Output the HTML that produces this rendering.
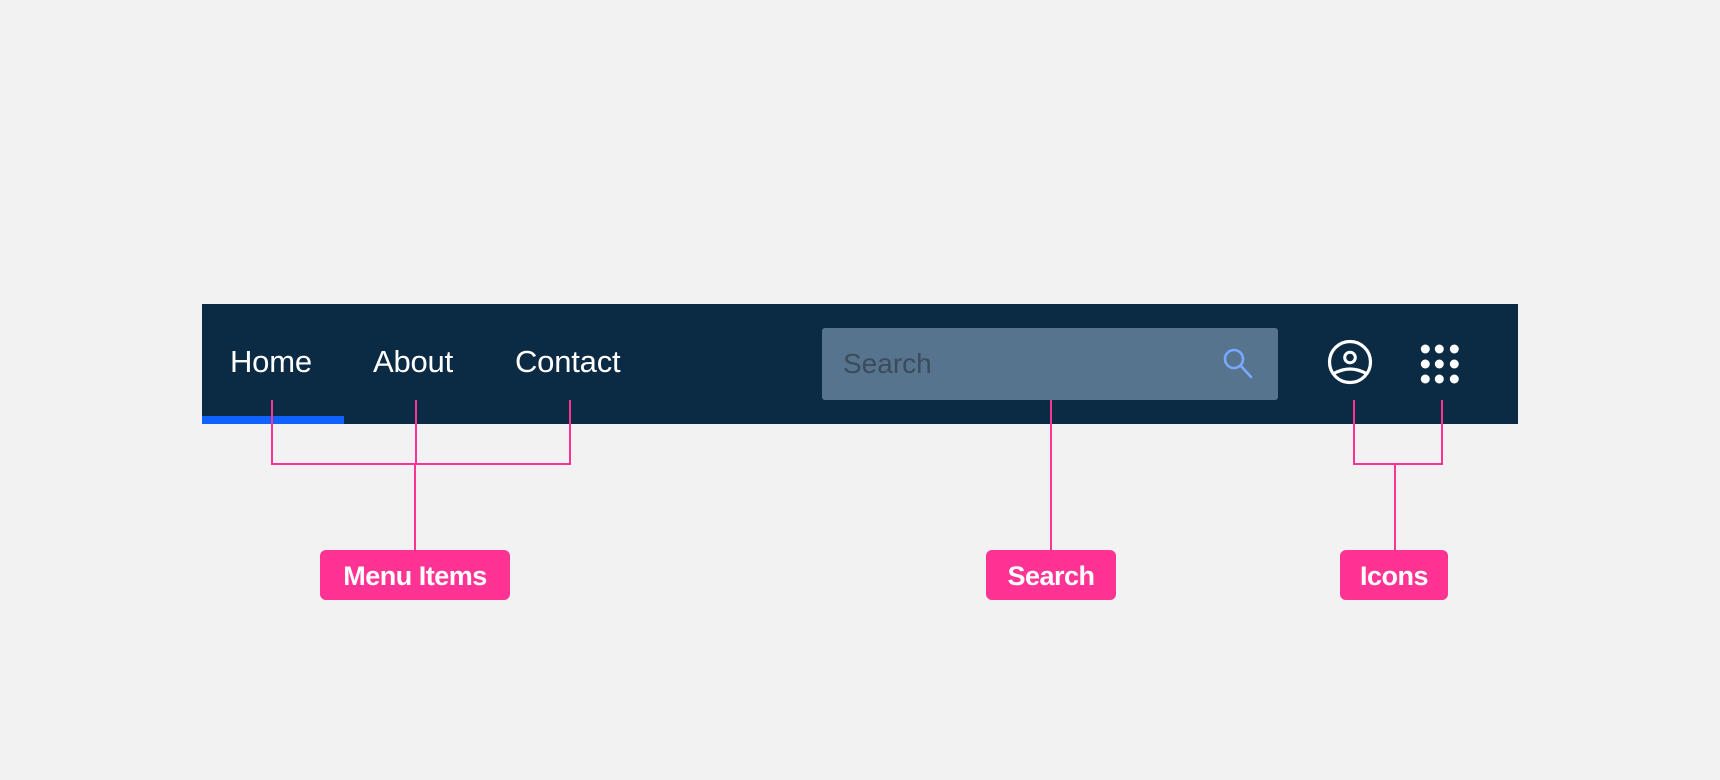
<!DOCTYPE html>
<html><head><meta charset="utf-8"><style>
html,body{margin:0;padding:0;width:1720px;height:780px;background:#f2f2f2;overflow:hidden;font-family:"Liberation Sans",Arial,sans-serif}
.abs{position:absolute}
.nav{left:202px;top:304px;width:1316px;height:120px;background:#0b2b45}
.item{position:absolute;top:342px;color:#fff;font-size:31px;line-height:40px;letter-spacing:-0.2px}
.ul{left:202px;top:416px;width:142px;height:8px;background:#0f62fe}
.search{left:822px;top:328px;width:456px;height:72px;background:#57748f;border-radius:3px}
.ph{left:843px;top:344px;font-size:28px;line-height:40px;color:#3b4b5c;position:absolute}
.p{background:#ff3393;position:absolute}
.lbl{position:absolute;top:550px;height:50px;background:#ff3393;border-radius:6px;color:#fff;font-weight:bold;font-size:27px;line-height:52px;text-align:center;letter-spacing:-0.5px}
</style></head><body>
<div class="abs nav"></div>
<div class="abs ul"></div>
<div class="item" style="left:230px">Home</div>
<div class="item" style="left:373px">About</div>
<div class="item" style="left:515px">Contact</div>
<div class="abs search"></div>
<div class="ph">Search</div>
<svg class="abs" style="left:1215px;top:344px" width="45" height="40" viewBox="0 0 45 40">
<circle cx="19" cy="15" r="9" fill="none" stroke="#78a9ff" stroke-width="2.6"/>
<line x1="26" y1="22" x2="36" y2="33" stroke="#78a9ff" stroke-width="2.6" stroke-linecap="round"/>
</svg>
<svg class="abs" style="left:1326px;top:338px" width="50" height="50" viewBox="0 0 50 50">
<circle cx="24" cy="24" r="20.5" fill="none" stroke="#fff" stroke-width="3.2"/>
<circle cx="24" cy="19.5" r="5.3" fill="none" stroke="#fff" stroke-width="3"/>
<path d="M7 36 Q24 26 41 36" fill="none" stroke="#fff" stroke-width="3.2"/>
</svg>
<svg class="abs" style="left:1415px;top:339px" width="50" height="50" viewBox="0 0 50 50" fill="#fff">
<circle cx="10.3" cy="10" r="4.5"/><circle cx="24.3" cy="10" r="4.5"/><circle cx="39.3" cy="10" r="4.5"/>
<circle cx="10.3" cy="25" r="4.5"/><circle cx="24.3" cy="25" r="4.5"/><circle cx="39.3" cy="25" r="4.5"/>
<circle cx="10.3" cy="40" r="4.5"/><circle cx="24.3" cy="40" r="4.5"/><circle cx="39.3" cy="40" r="4.5"/>
</svg>
<div class="p" style="left:271px;top:400px;width:2px;height:65px"></div>
<div class="p" style="left:415px;top:400px;width:2px;height:65px"></div>
<div class="p" style="left:569px;top:400px;width:2px;height:65px"></div>
<div class="p" style="left:271px;top:463px;width:300px;height:2px"></div>
<div class="p" style="left:414px;top:463px;width:2px;height:87px"></div>
<div class="p" style="left:1050px;top:400px;width:2px;height:150px"></div>
<div class="p" style="left:1353px;top:400px;width:2px;height:65px"></div>
<div class="p" style="left:1441px;top:400px;width:2px;height:65px"></div>
<div class="p" style="left:1353px;top:463px;width:90px;height:2px"></div>
<div class="p" style="left:1394px;top:463px;width:2px;height:87px"></div>
<div class="lbl" style="left:320px;width:190px">Menu Items</div>
<div class="lbl" style="left:986px;width:130px">Search</div>
<div class="lbl" style="left:1340px;width:108px">Icons</div>
</body></html>
